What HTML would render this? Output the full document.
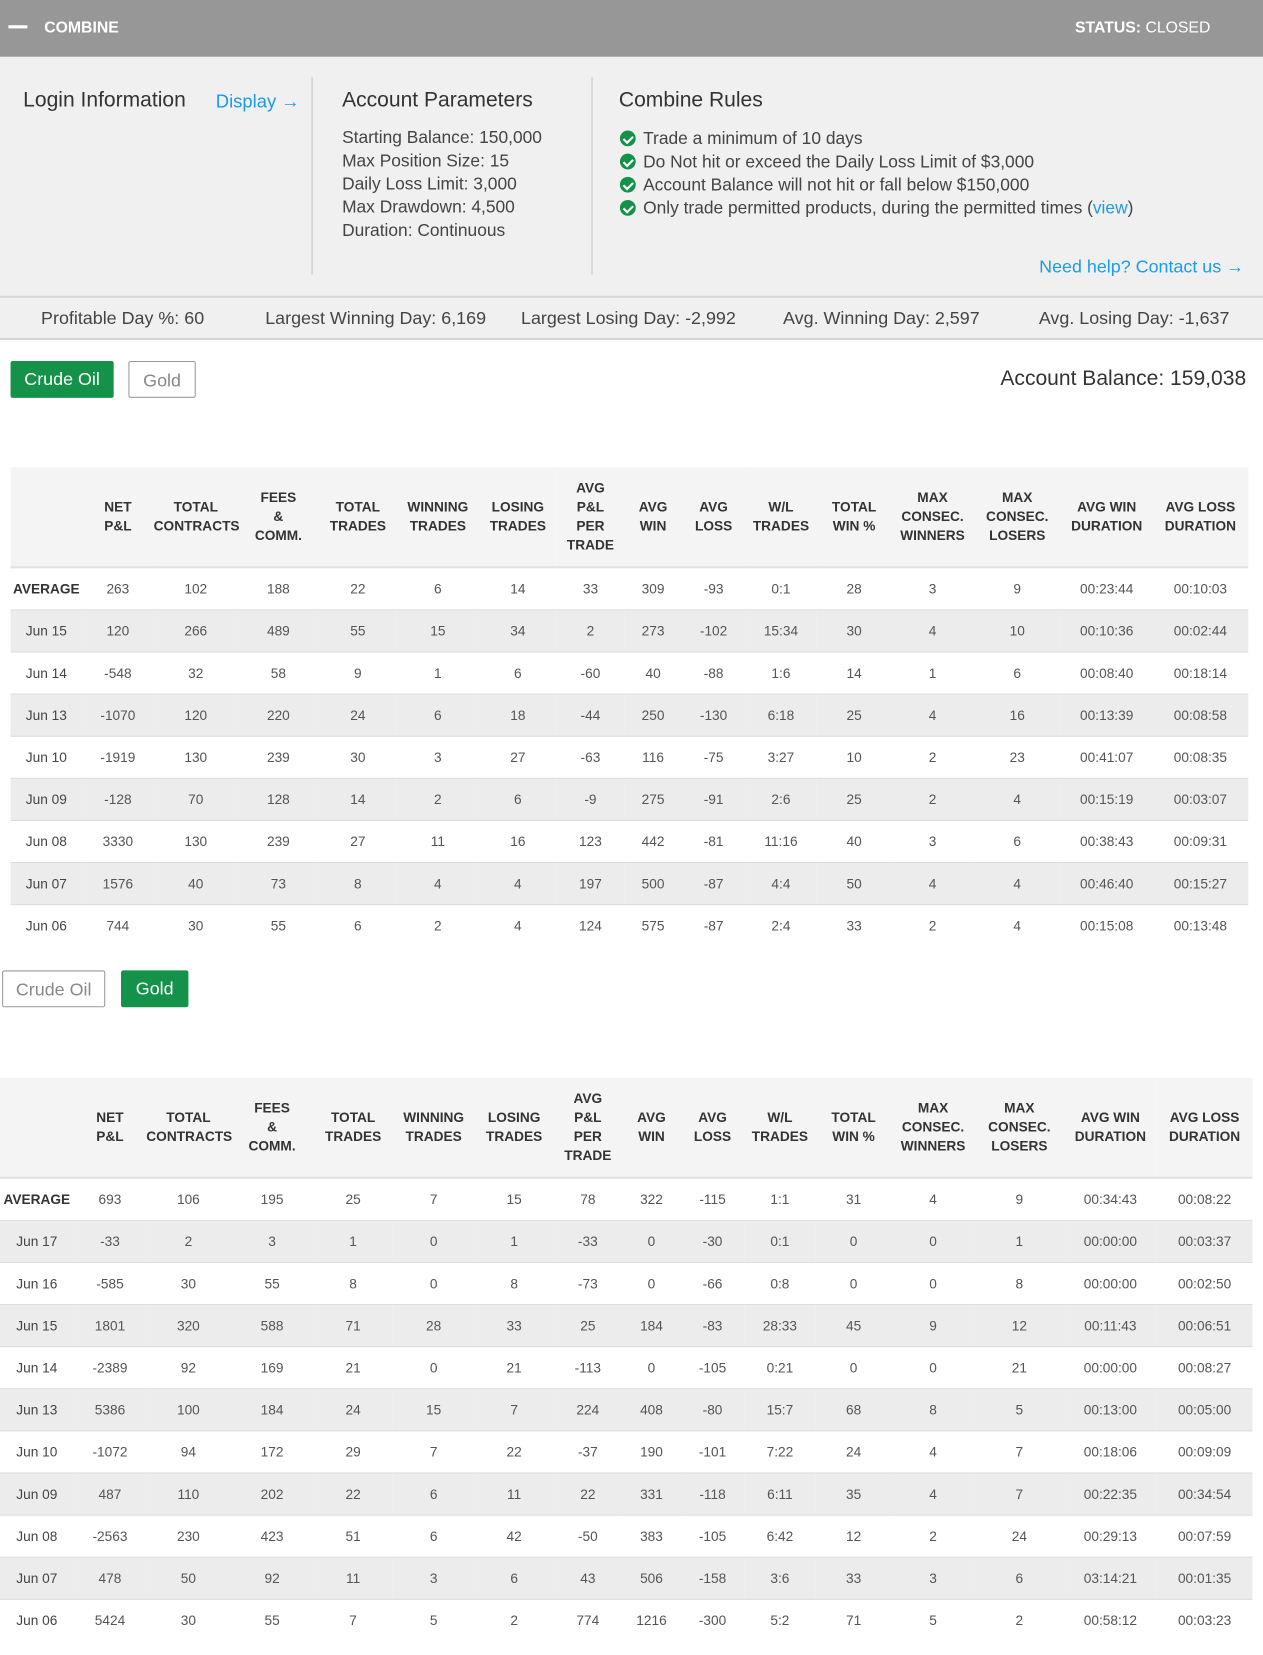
<!DOCTYPE html>
<html><head><meta charset="utf-8"><style>
html,body{margin:0;padding:0;background:#fff;width:1263px;height:1654px;overflow:hidden}
#w{position:absolute;left:0;top:0;width:1200px;height:1572px;transform:scale(1.0525);transform-origin:0 0;font-family:"Liberation Sans",Arial,sans-serif;color:#333}
.abs{position:absolute;white-space:nowrap}
.hdr{position:absolute;left:0;top:0;width:1200px;height:54px;background:#979797}
.info{position:absolute;left:0;top:54px;width:1200px;height:227px;background:#f0f0f0;border-bottom:2px solid #d6d6d6}
.stats{position:absolute;left:0;top:283px;width:1200px;height:38px;background:#f0f0f0;border-bottom:2px solid #d6d6d6}
.h2{font-size:20px;color:#333}
.p{font-size:16.5px;color:#444;line-height:22px}
.blue{color:#1e9be8}
.btn{position:absolute;height:35px;line-height:35px;text-align:center;font-size:17px;border-radius:2px;box-sizing:border-box}
.g{background:#15924a;color:#fff}
.o{border:1.5px solid #999;color:#888;background:#fff}
table{position:absolute;border-collapse:collapse;table-layout:fixed;font-size:13px}
th{background:#f4f4f4;height:94px;font-weight:bold;color:#333;font-size:13px;line-height:18px;text-align:center;padding:0;border-bottom:2px solid #e2e2e2}
td{height:39px;text-align:center;color:#555;padding:0;border-bottom:1px solid #dcdcdc}
tr.a td{background:#ececec}
td.l{color:#444}
td.av{font-weight:bold;color:#333}
.chk{display:inline-block;width:15px;height:15px;border-radius:50%;background:#15924a;position:relative;vertical-align:-2px;margin-right:7px}
.chk:after{content:"";position:absolute;left:4.5px;top:2.5px;width:3.5px;height:7px;border:solid #fff;border-width:0 2px 2px 0;transform:rotate(45deg)}
</style></head><body><div id="w">
<div class="hdr">
 <div class="abs" style="left:8px;top:24px;width:18px;height:3px;background:#fff"></div>
 <div class="abs" style="left:42px;top:18px;font-size:15px;font-weight:bold;color:#fff">COMBINE</div>
 <div class="abs" style="right:50px;top:18px;font-size:15px;color:#fff"><b>STATUS:</b> CLOSED</div>
</div>
<div class="info">
 <div class="abs h2" style="left:22px;top:30px">Login Information</div>
 <div class="abs blue" style="left:205px;top:32px;font-size:17.5px">Display →</div>
 <div class="abs" style="left:296px;top:19px;width:1px;height:188px;background:#c8c8c8"></div>
 <div class="abs h2" style="left:325px;top:30px">Account Parameters</div>
 <div class="abs p" style="left:325px;top:66px">Starting Balance: 150,000<br>Max Position Size: 15<br>Daily Loss Limit: 3,000<br>Max Drawdown: 4,500<br>Duration: Continuous</div>
 <div class="abs" style="left:562px;top:19px;width:1px;height:188px;background:#c8c8c8"></div>
 <div class="abs h2" style="left:588px;top:30px">Combine Rules</div>
 <div class="abs p" style="left:589px;top:67px"><span class="chk"></span>Trade a minimum of 10 days<br><span class="chk"></span>Do Not hit or exceed the Daily Loss Limit of $3,000<br><span class="chk"></span>Account Balance will not hit or fall below $150,000<br><span class="chk"></span>Only trade permitted products, during the permitted times (<span class="blue">view</span>)</div>
 <div class="abs blue" style="right:18px;top:190px;font-size:17px">Need help? Contact us →</div>
</div>
<div class="stats" style="font-size:17px;color:#444">
 <div class="abs" style="left:39px;top:10px">Profitable Day %: 60</div>
 <div class="abs" style="left:252px;top:10px">Largest Winning Day: 6,169</div>
 <div class="abs" style="left:495px;top:10px">Largest Losing Day: -2,992</div>
 <div class="abs" style="left:744px;top:10px">Avg. Winning Day: 2,597</div>
 <div class="abs" style="left:987px;top:10px">Avg. Losing Day: -1,637</div>
</div>
<div class="btn g" style="left:10px;top:343px;width:98px">Crude Oil</div>
<div class="btn o" style="left:122px;top:343px;width:64px">Gold</div>
<div class="abs" style="right:16px;top:349px;font-size:20px;color:#333">Account Balance: 159,038</div>

<table style="left:10px;top:444px;width:1176px">
<colgroup><col style="width:68px"><col style="width:68px"><col style="width:80px"><col style="width:77px"><col style="width:74px"><col style="width:78px"><col style="width:74px"><col style="width:64px"><col style="width:55px"><col style="width:60px"><col style="width:68px"><col style="width:71px"><col style="width:78px"><col style="width:83px"><col style="width:87px"><col style="width:91px"></colgroup>
<tr><th></th><th>NET<br>P&amp;L</th><th>TOTAL<br>CONTRACTS</th><th>FEES<br>&amp;<br>COMM.</th><th>TOTAL<br>TRADES</th><th>WINNING<br>TRADES</th><th>LOSING<br>TRADES</th><th>AVG<br>P&amp;L<br>PER<br>TRADE</th><th>AVG<br>WIN</th><th>AVG<br>LOSS</th><th>W/L<br>TRADES</th><th>TOTAL<br>WIN %</th><th>MAX<br>CONSEC.<br>WINNERS</th><th>MAX<br>CONSEC.<br>LOSERS</th><th>AVG WIN<br>DURATION</th><th>AVG LOSS<br>DURATION</th></tr>
<tr><td class="av">AVERAGE</td><td>263</td><td>102</td><td>188</td><td>22</td><td>6</td><td>14</td><td>33</td><td>309</td><td>-93</td><td>0:1</td><td>28</td><td>3</td><td>9</td><td>00:23:44</td><td>00:10:03</td></tr>
<tr class="a"><td class="l">Jun 15</td><td>120</td><td>266</td><td>489</td><td>55</td><td>15</td><td>34</td><td>2</td><td>273</td><td>-102</td><td>15:34</td><td>30</td><td>4</td><td>10</td><td>00:10:36</td><td>00:02:44</td></tr>
<tr><td class="l">Jun 14</td><td>-548</td><td>32</td><td>58</td><td>9</td><td>1</td><td>6</td><td>-60</td><td>40</td><td>-88</td><td>1:6</td><td>14</td><td>1</td><td>6</td><td>00:08:40</td><td>00:18:14</td></tr>
<tr class="a"><td class="l">Jun 13</td><td>-1070</td><td>120</td><td>220</td><td>24</td><td>6</td><td>18</td><td>-44</td><td>250</td><td>-130</td><td>6:18</td><td>25</td><td>4</td><td>16</td><td>00:13:39</td><td>00:08:58</td></tr>
<tr><td class="l">Jun 10</td><td>-1919</td><td>130</td><td>239</td><td>30</td><td>3</td><td>27</td><td>-63</td><td>116</td><td>-75</td><td>3:27</td><td>10</td><td>2</td><td>23</td><td>00:41:07</td><td>00:08:35</td></tr>
<tr class="a"><td class="l">Jun 09</td><td>-128</td><td>70</td><td>128</td><td>14</td><td>2</td><td>6</td><td>-9</td><td>275</td><td>-91</td><td>2:6</td><td>25</td><td>2</td><td>4</td><td>00:15:19</td><td>00:03:07</td></tr>
<tr><td class="l">Jun 08</td><td>3330</td><td>130</td><td>239</td><td>27</td><td>11</td><td>16</td><td>123</td><td>442</td><td>-81</td><td>11:16</td><td>40</td><td>3</td><td>6</td><td>00:38:43</td><td>00:09:31</td></tr>
<tr class="a"><td class="l">Jun 07</td><td>1576</td><td>40</td><td>73</td><td>8</td><td>4</td><td>4</td><td>197</td><td>500</td><td>-87</td><td>4:4</td><td>50</td><td>4</td><td>4</td><td>00:46:40</td><td>00:15:27</td></tr>
<tr><td class="l" style="border:0">Jun 06</td><td style="border:0">744</td><td style="border:0">30</td><td style="border:0">55</td><td style="border:0">6</td><td style="border:0">2</td><td style="border:0">4</td><td style="border:0">124</td><td style="border:0">575</td><td style="border:0">-87</td><td style="border:0">2:4</td><td style="border:0">33</td><td style="border:0">2</td><td style="border:0">4</td><td style="border:0">00:15:08</td><td style="border:0">00:13:48</td></tr>
</table>

<div class="btn o" style="left:2px;top:922px;width:98px">Crude Oil</div>
<div class="btn g" style="left:115px;top:922px;width:64px">Gold</div>

<table style="left:0;top:1024px;width:1190px">
<colgroup><col style="width:70px"><col style="width:69px"><col style="width:80px"><col style="width:79px"><col style="width:75px"><col style="width:78px"><col style="width:75px"><col style="width:65px"><col style="width:56px"><col style="width:60px"><col style="width:68px"><col style="width:72px"><col style="width:79px"><col style="width:85px"><col style="width:88px"><col style="width:91px"></colgroup>
<tr><th></th><th>NET<br>P&amp;L</th><th>TOTAL<br>CONTRACTS</th><th>FEES<br>&amp;<br>COMM.</th><th>TOTAL<br>TRADES</th><th>WINNING<br>TRADES</th><th>LOSING<br>TRADES</th><th>AVG<br>P&amp;L<br>PER<br>TRADE</th><th>AVG<br>WIN</th><th>AVG<br>LOSS</th><th>W/L<br>TRADES</th><th>TOTAL<br>WIN %</th><th>MAX<br>CONSEC.<br>WINNERS</th><th>MAX<br>CONSEC.<br>LOSERS</th><th>AVG WIN<br>DURATION</th><th>AVG LOSS<br>DURATION</th></tr>
<tr><td class="av">AVERAGE</td><td>693</td><td>106</td><td>195</td><td>25</td><td>7</td><td>15</td><td>78</td><td>322</td><td>-115</td><td>1:1</td><td>31</td><td>4</td><td>9</td><td>00:34:43</td><td>00:08:22</td></tr>
<tr class="a"><td class="l">Jun 17</td><td>-33</td><td>2</td><td>3</td><td>1</td><td>0</td><td>1</td><td>-33</td><td>0</td><td>-30</td><td>0:1</td><td>0</td><td>0</td><td>1</td><td>00:00:00</td><td>00:03:37</td></tr>
<tr><td class="l">Jun 16</td><td>-585</td><td>30</td><td>55</td><td>8</td><td>0</td><td>8</td><td>-73</td><td>0</td><td>-66</td><td>0:8</td><td>0</td><td>0</td><td>8</td><td>00:00:00</td><td>00:02:50</td></tr>
<tr class="a"><td class="l">Jun 15</td><td>1801</td><td>320</td><td>588</td><td>71</td><td>28</td><td>33</td><td>25</td><td>184</td><td>-83</td><td>28:33</td><td>45</td><td>9</td><td>12</td><td>00:11:43</td><td>00:06:51</td></tr>
<tr><td class="l">Jun 14</td><td>-2389</td><td>92</td><td>169</td><td>21</td><td>0</td><td>21</td><td>-113</td><td>0</td><td>-105</td><td>0:21</td><td>0</td><td>0</td><td>21</td><td>00:00:00</td><td>00:08:27</td></tr>
<tr class="a"><td class="l">Jun 13</td><td>5386</td><td>100</td><td>184</td><td>24</td><td>15</td><td>7</td><td>224</td><td>408</td><td>-80</td><td>15:7</td><td>68</td><td>8</td><td>5</td><td>00:13:00</td><td>00:05:00</td></tr>
<tr><td class="l">Jun 10</td><td>-1072</td><td>94</td><td>172</td><td>29</td><td>7</td><td>22</td><td>-37</td><td>190</td><td>-101</td><td>7:22</td><td>24</td><td>4</td><td>7</td><td>00:18:06</td><td>00:09:09</td></tr>
<tr class="a"><td class="l">Jun 09</td><td>487</td><td>110</td><td>202</td><td>22</td><td>6</td><td>11</td><td>22</td><td>331</td><td>-118</td><td>6:11</td><td>35</td><td>4</td><td>7</td><td>00:22:35</td><td>00:34:54</td></tr>
<tr><td class="l">Jun 08</td><td>-2563</td><td>230</td><td>423</td><td>51</td><td>6</td><td>42</td><td>-50</td><td>383</td><td>-105</td><td>6:42</td><td>12</td><td>2</td><td>24</td><td>00:29:13</td><td>00:07:59</td></tr>
<tr class="a"><td class="l">Jun 07</td><td>478</td><td>50</td><td>92</td><td>11</td><td>3</td><td>6</td><td>43</td><td>506</td><td>-158</td><td>3:6</td><td>33</td><td>3</td><td>6</td><td>03:14:21</td><td>00:01:35</td></tr>
<tr><td class="l" style="border:0">Jun 06</td><td style="border:0">5424</td><td style="border:0">30</td><td style="border:0">55</td><td style="border:0">7</td><td style="border:0">5</td><td style="border:0">2</td><td style="border:0">774</td><td style="border:0">1216</td><td style="border:0">-300</td><td style="border:0">5:2</td><td style="border:0">71</td><td style="border:0">5</td><td style="border:0">2</td><td style="border:0">00:58:12</td><td style="border:0">00:03:23</td></tr>
</table>
</div></body></html>
